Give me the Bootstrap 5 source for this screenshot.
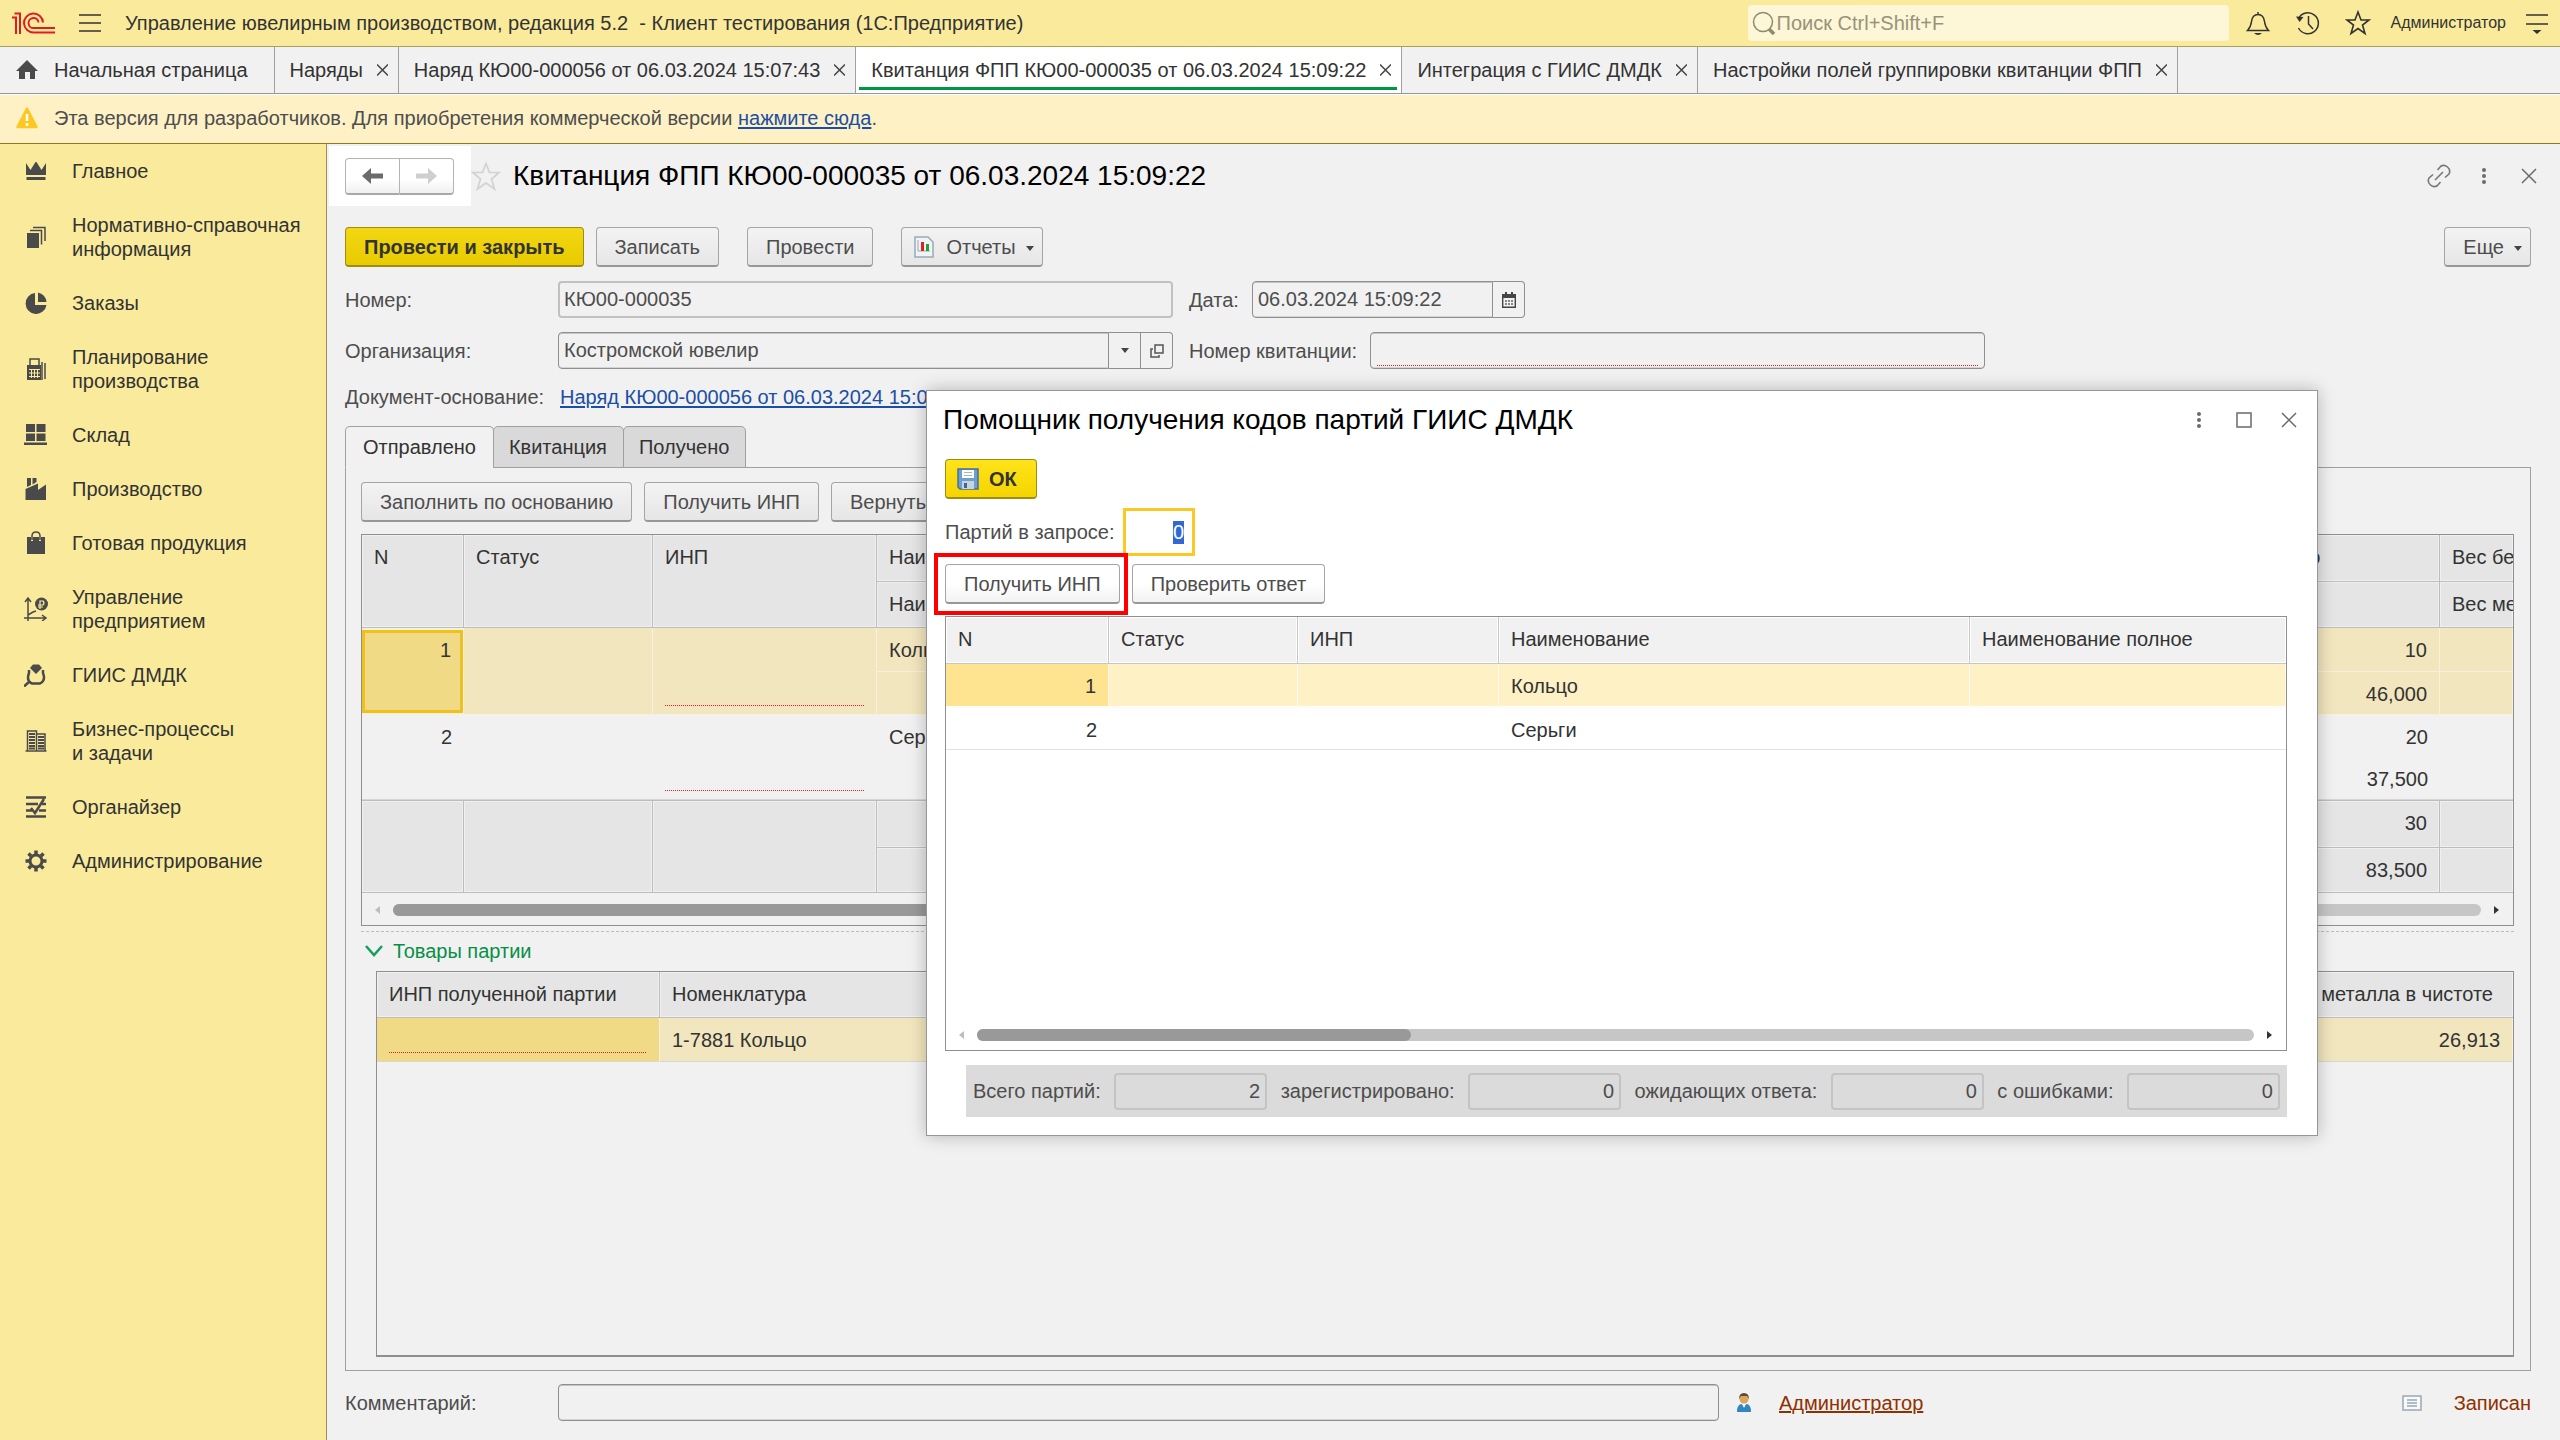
<!DOCTYPE html>
<html lang="ru">
<head>
<meta charset="utf-8">
<meta name="viewport" content="width=device-width, initial-scale=1">
<title>Управление ювелирным производством, редакция 5.2</title>
<link href="https://cdn.jsdelivr.net/npm/bootstrap@5.3.0/dist/css/bootstrap.min.css" rel="stylesheet">
<style>
  :root { --brand: #faeb9c; --form: #f1f1f1; --line: #a0a0a0; --ink: #333; --soft: #4d4d4d; }
  body { font-family: "Liberation Sans", Arial, sans-serif; font-size: 20px; line-height: 24px; color: var(--ink); background: var(--form); }
  svg { display: block; flex: none; }
  button { color: inherit; }
  .icon-btn { border: 0; background: none; padding: 0; display: flex; align-items: center; justify-content: center; }

  /* title bar */
  .app-bar { height: 47px; background: var(--brand); border-bottom: 1px solid #a89f62; padding: 0 12px 0 11px; }
  .app-search { width: 481px; height: 36px; background: #fdf7d7; border-radius: 4px; padding-left: 3px; margin-bottom: 1px; }
  .app-search input { border: 0; background: none; padding: 0; width: 100%; outline: 0; }
  .app-search input::placeholder { color: #98927a; opacity: 1; }
  .app-user { font-size: 16px; }

  /* open windows */
  .win-tabs { height: 47px; border-bottom: 1px solid #979797; }
  .win-tab { border-right: 1px solid var(--line); padding: 0 10px 0 15px; gap: 14px; position: relative; }
  .win-tab a { color: var(--ink); text-decoration: none; white-space: nowrap; }
  .win-tab.home { padding: 0 26px 0 16px; gap: 16px; }
  .win-tab.current { background: #fff; }
  .win-tab.current::after { content: ""; position: absolute; left: 3px; right: 4px; bottom: 3px; height: 3px; background: #009646; }

  .notice { height: 50px; background: #fef1c5; border-top: 1px solid #fff; border-bottom: 1px solid #8f7b1c; padding: 0 16px 2px; gap: 16px; color: var(--soft); }
  .notice a, .doc-link { color: #1b4fa5; text-underline-offset: 2px; }
  .doc-link { margin-left: 2px; }

  /* sections */
  .sections { width: 327px; flex: none; background: var(--brand); border-right: 1px solid #99905a; }
  .sections a { display: flex; align-items: center; gap: 24px; padding: 15px 20px 15px 24px; color: var(--ink); text-decoration: none; }

  /* document form */
  .doc-form { padding: 0 29px 19px 18px; color: var(--soft); }
  .doc-head { height: 64px; }
  .history-box { background: #fff; margin-left: -16px; width: 142px; height: 60px; padding: 0 17px 0 16px; }
  .history-box button { flex: 1; height: 37px; border: 1px solid #b4b4b4; border-bottom: 2px solid #a8a8a8; border-radius: 4px 0 0 4px; background: linear-gradient(#fff 60%, #f0f0f0); }
  .history-box button + button { border-left: 0; border-radius: 0 4px 4px 0; }
  .form-title { font-size: 28px; line-height: 32px; color: #000; margin: 0; font-weight: 400; }
  .win-tools { gap: 21px; margin: 0 -10px 0 auto; }
  .win-tools button { width: 24px; }

  .cmd { height: 40px; padding: 0 18px; border: 1px solid #a5a5a5; border-bottom: 2px solid #979797; border-radius: 4px; background: linear-gradient(#f3f3f3, #e6e6e6); white-space: nowrap; color: var(--soft); line-height: 24px; }
  .cmd-row { margin-top: 19px; }
  .cmd-apart { margin-left: 28px; }
  .cmd-main { font-weight: 700; color: #333; background: linear-gradient(#f2d712, #e8cb00); border-color: #a08c14; }
  .cmd-light { background: linear-gradient(#fff 50%, #f2f2f2); }
  .cmd-ok { background: linear-gradient(#ffe41a, #f5d400); padding: 0 19px 0 11px; gap: 10px; }
  .caret { width: 0; height: 0; border: 4px solid transparent; border-top: 5px solid #444; border-bottom: 0; }
  .cmd .caret { margin: 3px 0 0 10px; }

  .form-row { margin-top: 14px; }
  .fld { height: 37px; border: 1px solid #8f8f8f; border-radius: 4px; background: var(--form); box-shadow: inset 0 1px #c4c4c4, inset 0 -1px #d4d4d4; padding: 0 5px; color: var(--soft); min-width: 0; outline: 0; }
  .fld-lock { border: 2px solid #c1c1c1; box-shadow: none; padding: 0 4px; }
  .fld-need, .cell-need { background-image: repeating-linear-gradient(90deg, #e02020 0 1px, transparent 1px 2px); background-repeat: no-repeat; background-size: calc(100% - 12px) 1px; background-position: 6px calc(100% - 2px); }
  .pick { display: flex; height: 37px; }
  .pick .fld { flex: 1; border-radius: 4px 0 0 4px; }
  .pick button { width: 32px; border: 1px solid #8f8f8f; border-left: 0; background: var(--form); padding: 0; display: flex; align-items: center; justify-content: center; }
  .pick button:last-child { border-radius: 0 4px 4px 0; }
  .w-label { width: 213px; flex: none; }
  .w-date-label { width: 63px; }
  .w-rec-label { width: 181px; }
  .w-date { width: 273px; }
  .w-main { flex: 0 1 615px; }
  .w-note { flex: 0 1 1161px; }

  .page-tabs { height: 42px; margin: 17px 0 -1px; position: relative; }
  .page-tabs button { border: 1px solid var(--line); background: #d9d9d9; border-radius: 5px 5px 0 0; padding: 0 16px 0 15px; margin-right: -1px; color: var(--ink); }
  .page-tabs button.current { background: var(--form); border-bottom-color: var(--form); padding: 0 17px; }
  .page-panel { border: 1px solid var(--line); padding: 14px 16px 13px 15px; flex: 1; }

  .list-box { border: 1px solid #8f8f8f; overflow: hidden; }
  .grid { width: 100%; table-layout: fixed; border-collapse: separate; border-spacing: 0; color: var(--ink); }
  .grid th, .grid td { font-weight: 400; vertical-align: top; padding: 10px 0 0 12px; line-height: 24px; white-space: nowrap; overflow: hidden; }
  .grid .num { text-align: right; padding: 10px 12px 0 0; }
  .grid .num-head { text-align: right; padding-right: 20px; }
  .grid thead th, .grid tfoot td { background: #e5e5e5; border-right: 1px solid #bdbdbd; border-bottom: 1px solid #bdbdbd; box-shadow: inset 0 0 0 1px #f0f0f0; }
  .grid .edge { border-right: 0; }
  .grid .active td { background-color: #f2e6be; border-right: 1px solid #f7f1dc; border-bottom: 1px solid #f7f1dc; }
  .grid .close-row > td { border-bottom: 1px solid #d6d6d6; }
  .grid .close-row > .joined { border-bottom: 0; }
  .grid td.cell-need { background-size: calc(100% - 24px) 1px; background-position: 12px calc(100% - 8px); }
  .grid .active td.chosen { background-color: #f0da86; }
  .grid .active td.framed { box-shadow: inset 0 0 0 3px #eec11f; border-top: 2px solid #f7f1dc; border-bottom: 2px solid #f7f1dc; padding-top: 8px; }
  .lots tfoot tr:first-child td { border-top: 1px solid #bdbdbd; }
  .lots .c-num { width: 102px; }
  .c-state { width: 189px; }
  .lots .c-inp { width: 224px; }
  .lots .c-qty { width: 239px; }
  .lots .c-weight { width: 73px; }
  .goods .c-inp { width: 283px; }
  .goods .c-weight { width: 250px; }
  .dlg-grid .c-num { width: 163px; }
  .dlg-grid .c-inp { width: 201px; }
  .dlg-grid .c-name { width: 471px; }
  .h-head { height: 47px; }
  .h-sub { height: 46px; }
  .h-cell { height: 44px; }
  .h-low { height: 43px; }
  .h-tight { height: 42px; }
  .h-foot { height: 48px; }
  .h-foot-low { height: 45px; }
  .dlg-grid thead th { background: #f1f1f1; box-shadow: inset 0 0 0 1px #fff; border-color: #c6c6c6; }
  .dlg-grid .active td { background-color: #fef1c5; border-color: #fffaf0; box-shadow: inset 0 -1px #fff; }
  .dlg-grid .active td.chosen { background-color: #fee490; }
  .dlg-grid tbody td { border-bottom: 1px solid #e2e2e2; }

  .scroll-row { height: 32px; gap: 13px; padding: 1px 14px 0 13px; }
  .scroll-rail { flex: 1; height: 12px; border-radius: 6px; background: #c6c6c6; }
  .scroll-thumb { height: 12px; border-radius: 6px; background: #999; }
  .arrow-l, .arrow-r { width: 0; height: 0; border: 4px solid transparent; }
  .arrow-l { border-right: 5px solid #bdbdbd; border-left: 0; }
  .arrow-r { border-left: 5px solid #333; border-right: 0; }

  .splitter { border-top: 1px dashed #bdbdbd; margin-top: 5px; }
  .group-head { color: #078f48; gap: 10px; padding-left: 4px; margin: 7px 0 8px; }
  .goods { margin-left: 15px; flex: 1; border-bottom-width: 2px; }
  .status-row { margin-top: 13px; }
  .brown { color: #8f3000; }

  /* helper window */
  .helper { position: absolute; left: 926px; right: 242px; top: 390px; height: 746px; background: #fff; border: 1px solid #979797; box-shadow: 0 0 16px rgba(0,0,0,.25); padding: 0 30px 18px 18px; color: var(--soft); }
  .helper-title { height: 60px; margin: 0 -4px 0 -2px; padding-bottom: 2px; }
  .batch-row { margin-top: 9px; }
  .batch-row label { width: 178px; }
  .batch { width: 72px; height: 48px; border: 3px solid #fcc822; padding: 0 8px 0 4px; text-align: right; outline: 0; color: #333; background: #fff; }
  .batch::selection { background: #3367d6; color: #fff; }
  .callout-box { position: absolute; left: 7px; top: 162px; width: 194px; height: 62px; border: 4px solid #f00; pointer-events: none; }
  .totals { background: #dbdbdb; height: 52px; margin: 14px 0 0 21px; padding: 0 7px; }
  .totals .fld { width: 153px; flex: none; background: #dbdbdb; text-align: right; border: 2px solid #c4c4c4; box-shadow: none; padding: 0 5px; }
</style>
</head>
<body>
<div class="d-flex flex-column min-vh-100 position-relative">

  <header class="app-bar d-flex align-items-center">
    <svg width="44" height="24" viewBox="11 11 44 24" fill="none" stroke="#e01b22" stroke-width="2"><path d="M12 17.500h4v16.500M14.500 13.500h5.500v20.500M43 22.500a9.500 9.500 0 1 0-9 10h21M38.500 22.500a5 5 0 1 0-4.500 5.500h21"/></svg>
    <button class="icon-btn ms-4" type="button" aria-label="Меню"><svg width="22" height="20" fill="none" stroke="#333" stroke-width="1.500"><path d="M0 2h22M0 10h22M0 18h22"/></svg></button>
    <span class="ms-4">Управление ювелирным производством, редакция 5.2 &nbsp;- Клиент тестирования (1С:Предприятие)</span>
    <label class="app-search d-flex align-items-center ms-auto">
      <svg width="26" height="26" fill="none" stroke="#8f8a72" stroke-width="1.500"><circle cx="12" cy="12" r="9.500"/><path d="M18 19l5 5" stroke-width="3.500"/></svg>
      <input type="search" aria-label="Поиск" placeholder="Поиск Ctrl+Shift+F">
    </label>
    <button class="icon-btn ms-3" type="button" aria-label="Уведомления"><svg width="26" height="26" fill="none" stroke="#333" stroke-width="1.500"><path d="M2.500 20.500c3-3 3.500-5 4-9 .6-4.500 2.500-7 6.500-7s5.900 2.500 6.500 7c.5 4 1 6 4 9zM13 2v2"/><path d="M9 23h8q-4 4-8 0z" fill="#333" stroke="none"/></svg></button>
    <button class="icon-btn ms-4" type="button" aria-label="История"><svg width="26" height="26" fill="none" stroke="#333" stroke-width="1.500"><path d="M3.500 8.500a10.500 10.500 0 1 1 0 9.500M13.500 6v8l4.500 5"/><path d="M1 6.500l7.500.5-4 5z" fill="#333" stroke="none"/></svg></button>
    <button class="icon-btn ms-4" type="button" aria-label="Избранное"><svg width="26" height="26" fill="none" stroke="#333" stroke-width="1.600"><path d="M13 2l3 8h8l-6.500 5 2.500 8.500-7-5-7 5L8.500 15 2 10h8z"/></svg></button>
    <span class="app-user ms-3 ps-1">Администратор</span>
    <button class="icon-btn ms-3 ps-1" type="button" aria-label="Сервис"><svg width="22" height="22" viewBox="0 0 22 22" fill="none" stroke="#333" stroke-width="1.500"><path d="M0 3h22M0 12h22"/><path d="M6.500 18h9L11 22z" fill="#333" stroke="none"/></svg></button>
  </header>

  <nav class="win-tabs d-flex">
    <div class="win-tab home d-flex align-items-center"><svg width="22" height="20" fill="#4a4a4a"><path d="M11 0l11 11h-3v8h-5v-7H9v7H3v-8H0z"/></svg><a href="#">Начальная страница</a></div>
    <div class="win-tab d-flex align-items-center"><a href="#">Наряды</a><button class="icon-btn" type="button" aria-label="Закрыть"><svg width="11" height="12" stroke="#444" stroke-width="1.500"><path d="M0 .5l11 11M11 .5l-11 11"/></svg></button></div>
    <div class="win-tab d-flex align-items-center"><a href="#">Наряд КЮ00-000056 от 06.03.2024 15:07:43</a><button class="icon-btn" type="button" aria-label="Закрыть"><svg width="11" height="12" stroke="#444" stroke-width="1.500"><path d="M0 .5l11 11M11 .5l-11 11"/></svg></button></div>
    <div class="win-tab current d-flex align-items-center"><a href="#">Квитанция ФПП КЮ00-000035 от 06.03.2024 15:09:22</a><button class="icon-btn" type="button" aria-label="Закрыть"><svg width="11" height="12" stroke="#444" stroke-width="1.500"><path d="M0 .5l11 11M11 .5l-11 11"/></svg></button></div>
    <div class="win-tab d-flex align-items-center"><a href="#">Интеграция с ГИИС ДМДК</a><button class="icon-btn" type="button" aria-label="Закрыть"><svg width="11" height="12" stroke="#444" stroke-width="1.500"><path d="M0 .5l11 11M11 .5l-11 11"/></svg></button></div>
    <div class="win-tab d-flex align-items-center"><a href="#">Настройки полей группировки квитанции ФПП</a><button class="icon-btn" type="button" aria-label="Закрыть"><svg width="11" height="12" stroke="#444" stroke-width="1.500"><path d="M0 .5l11 11M11 .5l-11 11"/></svg></button></div>
  </nav>

  <div class="notice d-flex align-items-center">
    <svg width="22" height="22"><path d="M11 1.500L20.500 20H1.500z" fill="#fcc822" stroke="#fcc822" stroke-width="2.500" stroke-linejoin="round"/><path d="M11 7v7M11 16v3" stroke="#fff" stroke-width="2.500"/></svg>
    <span>Эта версия для разработчиков. Для приобретения коммерческой версии <a href="#">нажмите сюда</a>.</span>
  </div>

  <div class="d-flex flex-grow-1">
    <nav class="sections">
      <a href="#"><svg width="24" height="24" fill="#4a4a4a"><path d="M2 4l4.500 7 5-8h1l5 8L22 4v12H2zM2.500 18h19v3h-19z"/></svg>Главное</a>
      <a href="#"><svg width="24" height="24" fill="#4a4a4a"><path d="M3 8h12v15H3z"/><path d="M6 5.500h11.500v14M9 2.500h12V16" fill="none" stroke="#4a4a4a" stroke-width="1.500"/></svg><span>Нормативно-справочная<br>информация</span></a>
      <a href="#"><svg width="24" height="24" fill="#4a4a4a"><path d="M11 2a10.500 10.500 0 1 0 11.500 12H11z"/><path d="M14 1.500A10.500 10.500 0 0 1 22.500 11H14z"/></svg>Заказы</a>
      <a href="#"><svg width="24" height="24" fill="none" stroke="#4a4a4a" stroke-width="1.500"><path d="M6 9V2h9v7M18 5v18M21 6v16"/><path d="M3 8h14v15H3z" fill="#4a4a4a" stroke="none"/><path d="M5 12.500h11M5 16h11M5 19.500h11M7.500 12v9M10.500 12v9M13.500 12v9" stroke="#faeb9c" stroke-width="1"/></svg><span>Планирование<br>производства</span></a>
      <a href="#"><svg width="24" height="24" fill="#4a4a4a"><path d="M2 1h9v8H2zM12.500 1h9v8h-9zM2 10.500h9V18H2zM12.500 10.500h9V18h-9zM0 19.500h23V22H0z"/></svg>Склад</a>
      <a href="#"><svg width="24" height="24" fill="#4a4a4a"><path d="M3 1h4v7l-4 2zM8.500 1h4v4l-4 2.500zM1.500 12L14 6.500V13l8-5.500v15.500H1.500z"/></svg>Производство</a>
      <a href="#"><svg width="24" height="24" fill="#4a4a4a"><path d="M3 6h4v4h2V6h6v4h2V6h4v17H3z"/><path d="M8 9V5q0-4 4-4t4 4v4" fill="none" stroke="#4a4a4a" stroke-width="1.500"/></svg>Готовая продукция</a>
      <a href="#"><svg width="24" height="24" fill="none" stroke="#4a4a4a" stroke-width="1.500"><path d="M4 24V2M0 21h22M1 5l3-4 3 4M18 18l4 3-4 3M4 18l5-3 3-1"/><circle cx="17.500" cy="7" r="6.500" fill="#4a4a4a" stroke="none"/><path d="M16 12V4h3q2 2 0 4h-5M14 10h5" stroke="#faeb9c" stroke-width="1.200"/></svg><span>Управление<br>предприятием</span></a>
      <a href="#"><svg width="24" height="24" fill="none" stroke="#4a4a4a" stroke-width="2.500"><path d="M9 1.500h6L18 5l-6 6-6-6z" fill="#4a4a4a" stroke="none"/><path d="M5 7v3q-3 8 3 10.500h8q6-3 3-10.500V7M6 18l-6 5.500"/></svg>ГИИС ДМДК</a>
      <a href="#"><svg width="24" height="24" fill="none" stroke="#4a4a4a" stroke-width="1.500"><path d="M3.500 22V2h9v20M12.500 5h8.500v17M1.500 22h21"/><path d="M5 5h6M5 8h6M5 11h6M5 14h6M5 17h6M5 19.500h6M14 8h6M14 11h6M14 14h6M14 17h6M14 19.500h6" stroke-width="1.800"/></svg><span>Бизнес-процессы<br>и задачи</span></a>
      <a href="#"><svg width="24" height="24" fill="none" stroke="#4a4a4a" stroke-width="2.500"><path d="M2 2.500h20M2 9h12M18 9h4M2 15.500h6M15 15.500h7M2 21.500h20M7 13l4 5 9-14"/></svg>Органайзер</a>
      <a href="#"><svg width="24" height="24" fill="none" stroke="#4a4a4a"><circle cx="12" cy="12" r="6" stroke-width="3"/><path d="M12 1.500V5M12 19v3.500M1.500 12H5M19 12h3.500M4.500 4.500L7 7M17 17l2.500 2.500M4.500 19.500L7 17M17 7l2.500-2.500" stroke-width="3.500"/></svg>Администрирование</a>
    </nav>

    <main class="doc-form d-flex flex-column flex-grow-1">
      <div class="doc-head d-flex align-items-center">
        <div class="history-box d-flex align-items-center">
          <button type="button" class="d-flex align-items-center justify-content-center" aria-label="Назад"><svg width="22" height="16"><path d="M0 8l9-8v5.500h12v5H9V16z" fill="#6b6b6b"/></svg></button>
          <button type="button" class="d-flex align-items-center justify-content-center" aria-label="Вперед"><svg width="22" height="16"><path d="M21 8l-9-8v5.500H0v5h12V16z" fill="#cfcfcf"/></svg></button>
        </div>
        <button class="icon-btn" type="button" aria-label="В избранное"><svg width="30" height="30" fill="none" stroke="#d2d2d2" stroke-width="1.700"><path d="M15 2.500l3.500 9h9.500l-7.500 6.500 3 10L15 22l-8.500 6 3-10L2 11.500h9.500z"/></svg></button>
        <h1 class="form-title ms-2 ps-1">Квитанция ФПП КЮ00-000035 от 06.03.2024 15:09:22</h1>
        <div class="win-tools d-flex align-items-center">
          <button class="icon-btn" type="button" aria-label="Ссылка"><svg width="24" height="24" fill="none" stroke="#777" stroke-width="1.600"><path d="M10.500 6l3-3.500q3.500-2.500 7 .5t1.500 7L18 13.500M13.500 18l-3 3.500q-3.500 2.500-7-.5T2 14l4-3.500M8 16l8-8"/></svg></button>
          <button class="icon-btn" type="button" aria-label="Еще действия"><svg width="6" height="18" fill="#6b6b6b"><circle cx="3" cy="3" r="2"/><circle cx="3" cy="9" r="2"/><circle cx="3" cy="15" r="2"/></svg></button>
          <button class="icon-btn" type="button" aria-label="Закрыть"><svg width="16" height="16" stroke="#6b6b6b" stroke-width="1.500"><path d="M1 1l14 14M15 1L1 15"/></svg></button>
        </div>
      </div>

      <div class="cmd-row d-flex">
        <button class="cmd cmd-main me-2" type="button">Провести и закрыть</button>
        <button class="cmd ms-1" type="button">Записать</button>
        <button class="cmd cmd-apart" type="button">Провести</button>
        <button class="cmd cmd-apart d-flex align-items-center px-2" type="button"><svg class="mx-1" width="20" height="22"><path d="M1 1h13l5 5v15H1z" fill="#eef3f6" stroke="#9aabb5" stroke-width="1.500"/><path d="M4 4v11h12" fill="none" stroke="#9ab"/><path d="M7 6h3v9H7z" fill="#e02020"/><path d="M12 8h3v7h-3z" fill="#28a02c"/></svg><span class="ms-2">Отчеты</span><span class="caret"></span></button>
        <button class="cmd ms-auto d-flex align-items-center pe-2" type="button">Еще<span class="caret"></span></button>
      </div>

      <div class="form-row d-flex align-items-center">
        <label class="w-label" for="docNo">Номер:</label>
        <input class="fld fld-lock w-main" id="docNo" value="КЮ00-000035" readonly>
        <label class="w-date-label ms-3" for="docDate">Дата:</label>
        <div class="pick w-date"><input class="fld" id="docDate" value="06.03.2024 15:09:22"><button type="button" aria-label="Календарь"><svg width="14" height="16"><path d="M.7 2.700h12.600v12.600H.7z" fill="none" stroke="#444" stroke-width="1.400"/><path d="M0 2h14v4H0zM3 0h2v3H3zM9 0h2v3H9z" fill="#444"/><path d="M3 9h8M3 12h8" stroke="#666" stroke-width="1.500" stroke-dasharray="2 1"/></svg></button></div>
      </div>
      <div class="form-row d-flex align-items-center">
        <label class="w-label" for="org">Организация:</label>
        <div class="pick w-main"><input class="fld" id="org" value="Костромской ювелир"><button type="button" aria-label="Выбрать"><span class="caret"></span></button><button type="button" aria-label="Открыть"><svg width="14" height="14" fill="none" stroke="#555" stroke-width="1.500"><path d="M5 1h8v8H5zM3 5H1v8h8v-2"/></svg></button></div>
        <label class="w-rec-label ms-3" for="recNo">Номер квитанции:</label>
        <input class="fld fld-need w-main" id="recNo">
      </div>
      <div class="d-flex mt-3">
        <span class="w-label">Документ-основание:</span>
        <a class="doc-link" href="#">Наряд КЮ00-000056 от 06.03.2024 15:07:43</a>
      </div>

      <div class="page-tabs d-flex" role="tablist">
        <button class="current" type="button" role="tab">Отправлено</button>
        <button type="button" role="tab">Квитанция</button>
        <button type="button" role="tab">Получено</button>
      </div>
      <section class="page-panel d-flex flex-column">
        <div class="d-flex mb-2 pb-1">
          <button class="cmd me-2" type="button">Заполнить по основанию</button>
          <button class="cmd ms-1 me-2" type="button">Получить ИНП</button>
          <button class="cmd ms-1" type="button">Вернуть</button>
        </div>
        <div class="list-box">
          <table class="grid lots">
            <colgroup><col class="c-num"><col class="c-state"><col class="c-inp"><col><col class="c-qty"><col class="c-weight"></colgroup>
            <thead>
              <tr class="h-head"><th rowspan="2">N</th><th rowspan="2">Статус</th><th rowspan="2">ИНП</th><th>Наименование</th><th>Количество</th><th class="edge">Вес бе</th></tr>
              <tr class="h-sub"><th>Наименование полное</th><th></th><th class="edge">Вес ме</th></tr>
            </thead>
            <tbody>
              <tr class="active h-cell"><td class="num chosen framed" rowspan="2">1</td><td rowspan="2"></td><td class="cell-need" rowspan="2"></td><td>Кольцо</td><td class="num">10</td><td></td></tr>
              <tr class="active h-low"><td></td><td class="num">46,000</td><td></td></tr>
              <tr class="close-row h-tight"><td class="num" rowspan="2">2</td><td rowspan="2"></td><td class="cell-need" rowspan="2"></td><td class="joined">Серьги</td><td class="num joined">20</td><td class="joined"></td></tr>
              <tr class="close-row h-low"><td></td><td class="num">37,500</td><td></td></tr>
            </tbody>
            <tfoot>
              <tr class="h-foot"><td rowspan="2"></td><td rowspan="2"></td><td rowspan="2"></td><td></td><td class="num">30</td><td class="edge"></td></tr>
              <tr class="h-foot-low"><td></td><td class="num">83,500</td><td class="edge"></td></tr>
            </tfoot>
          </table>
          <div class="scroll-row d-flex align-items-center"><span class="arrow-l"></span><div class="scroll-rail"><div class="scroll-thumb" style="width:60%"></div></div><span class="arrow-r"></span></div>
        </div>
        <div class="splitter"></div>
        <div class="group-head d-flex align-items-center"><svg width="18" height="12" fill="none" stroke="#17a05a" stroke-width="2.500"><path d="M1 1l8 9 8-9"/></svg><span>Товары партии</span></div>
        <div class="list-box goods">
          <table class="grid">
            <colgroup><col class="c-inp"><col><col class="c-weight"></colgroup>
            <thead><tr class="h-sub"><th>ИНП полученной партии</th><th>Номенклатура</th><th class="num-head edge">Вес металла в чистоте</th></tr></thead>
            <tbody><tr class="active close-row h-cell"><td class="chosen cell-need"></td><td>1-7881 Кольцо</td><td class="num">26,913</td></tr></tbody>
          </table>
        </div>
      </section>

      <div class="status-row d-flex align-items-center">
        <label class="w-label" for="note">Комментарий:</label>
        <input class="fld w-note" id="note">
        <svg class="ms-3 me-4" width="20" height="20"><path d="M2 19q0-8 5-8h4q5 0 5 8z" fill="#2f86c0"/><path d="M7 11h4l-2 4z" fill="#fff"/><circle cx="9" cy="6" r="4.500" fill="#dba55a"/><path d="M4 6q0-6 5-6t5 6l-2-3H6z" fill="#5b4a3a"/></svg>
        <a class="brown" href="#">Администратор</a>
        <svg class="ms-auto" width="20" height="16" fill="#f7f9fb" stroke="#9ca8b4" stroke-width="1.500"><path d="M1 1h18v14H1z"/><path d="M5 5h10M5 8h10M5 11h10"/></svg>
        <span class="brown ms-4 ps-2">Записан</span>
      </div>
    </main>
  </div>

  <section class="helper d-flex flex-column" role="dialog" aria-labelledby="helperTitle">
    <div class="helper-title d-flex align-items-center">
      <h2 class="form-title" id="helperTitle">Помощник получения кодов партий ГИИС ДМДК</h2>
      <div class="win-tools d-flex align-items-center">
        <button class="icon-btn" type="button" aria-label="Еще действия"><svg width="6" height="18" fill="#6b6b6b"><circle cx="3" cy="3" r="2"/><circle cx="3" cy="9" r="2"/><circle cx="3" cy="15" r="2"/></svg></button>
        <button class="icon-btn" type="button" aria-label="Развернуть"><svg width="16" height="16" fill="none" stroke="#6b6b6b" stroke-width="1.500"><path d="M1 1h14v14H1z"/></svg></button>
        <button class="icon-btn" type="button" aria-label="Закрыть"><svg width="16" height="16" stroke="#6b6b6b" stroke-width="1.500"><path d="M1 1l14 14M15 1L1 15"/></svg></button>
      </div>
    </div>
    <div class="d-flex mt-2">
      <button class="cmd cmd-main cmd-ok d-flex align-items-center" type="button"><svg width="22" height="22"><path d="M1 1h20v20H3l-2-2z" fill="#6f9fd0" stroke="#4a6f9c" stroke-width="1.500"/><path d="M5 2h12v8H5z" fill="#fff"/><path d="M7 4.500h8M7 7.500h8" stroke="#9bb"/><path d="M5 13h12v8H5z" fill="#c9d3dc"/><path d="M7 15h3v5H7z" fill="#3d6796"/></svg>ОК</button>
    </div>
    <div class="batch-row d-flex align-items-center">
      <label for="batch">Партий в запросе:</label>
      <input class="batch" id="batch" value="0">
    </div>
    <div class="d-flex mt-2 mb-2 pb-1">
      <button class="cmd cmd-light me-2" type="button">Получить ИНП</button>
      <button class="cmd cmd-light ms-1" type="button">Проверить ответ</button>
    </div>
    <div class="list-box d-flex flex-column flex-grow-1">
      <table class="grid dlg-grid">
        <colgroup><col class="c-num"><col class="c-state"><col class="c-inp"><col class="c-name"><col></colgroup>
        <thead><tr class="h-head"><th>N</th><th>Статус</th><th>ИНП</th><th>Наименование</th><th class="edge">Наименование полное</th></tr></thead>
        <tbody>
          <tr class="active h-cell"><td class="num chosen">1</td><td></td><td></td><td>Кольцо</td><td></td></tr>
          <tr class="h-tight"><td class="num">2</td><td></td><td></td><td>Серьги</td><td></td></tr>
        </tbody>
      </table>
      <div class="scroll-row d-flex align-items-center mt-auto"><span class="arrow-l"></span><div class="scroll-rail"><div class="scroll-thumb" style="width:34%"></div></div><span class="arrow-r"></span></div>
    </div>
    <div class="totals d-flex align-items-center justify-content-between">
      <label for="t1">Всего партий:</label><input class="fld" id="t1" value="2" readonly>
      <label for="t2">зарегистрировано:</label><input class="fld" id="t2" value="0" readonly>
      <label for="t3">ожидающих ответа:</label><input class="fld" id="t3" value="0" readonly>
      <label for="t4">с ошибками:</label><input class="fld" id="t4" value="0" readonly>
    </div>
    <div class="callout-box"></div>
  </section>
</div>
<script src="https://cdn.jsdelivr.net/npm/bootstrap@5.3.0/dist/js/bootstrap.bundle.min.js"></script>
<script>
  const batch = document.getElementById('batch');
  batch.focus();
  batch.select();
</script>
</body>
</html>
